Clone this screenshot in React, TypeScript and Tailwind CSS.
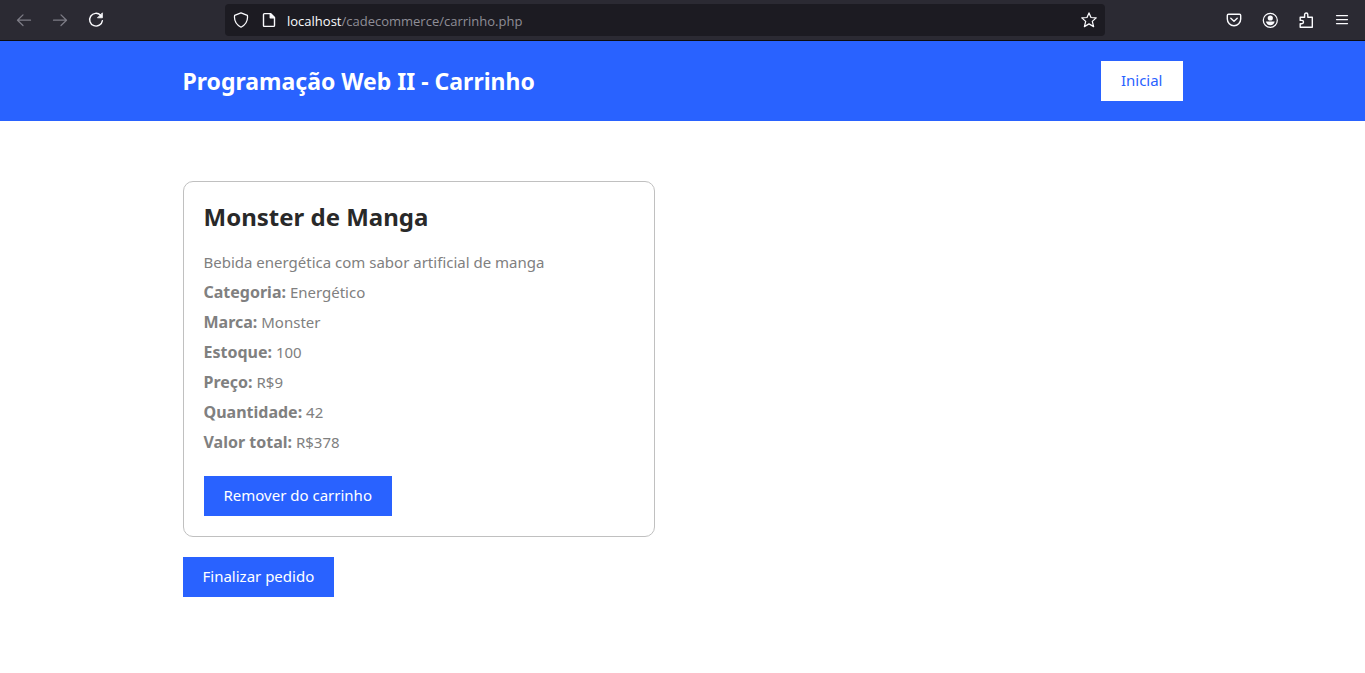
import type { ReactNode } from "react";

function Icon({ children, className = "" }: { children: ReactNode; className?: string }) {
  return (
    <svg
      viewBox="0 0 16 16"
      className={`h-4 w-4 ${className}`}
      fill="none"
      stroke="currentColor"
      strokeWidth="1.25"
      strokeLinecap="round"
      strokeLinejoin="round"
      aria-hidden="true"
    >
      {children}
    </svg>
  );
}

function ToolButton({ label, disabled, children }: { label: string; disabled?: boolean; children: ReactNode }) {
  return (
    <button
      type="button"
      aria-label={label}
      disabled={disabled}
      className="flex h-8 w-9 items-center justify-center text-[#fbfbfe] disabled:text-[#7d7c86]"
    >
      {children}
    </button>
  );
}

function BrowserBar() {
  return (
    <div className="flex h-[41px] items-center border-b border-[#0c0c0d] bg-[#2b2a33]">
      <div className="flex w-[225px] shrink-0 pl-1.5">
        <ToolButton label="Voltar" disabled>
          <Icon><path d="M14.5 8.2H1.5M7 2.9L1.5 8.2L7 13.5" /></Icon>
        </ToolButton>
        <ToolButton label="Avançar" disabled>
          <Icon><path d="M1.5 8.2H14.5M9 2.9L14.5 8.2L9 13.5" /></Icon>
        </ToolButton>
        <ToolButton label="Recarregar">
          <Icon>
            <path d="M12.6 3.2A6.4 6.4 0 1 0 14.4 8.6" strokeWidth="1.4" />
            <path d="M14.4 1.2V5.8H9.8Z" fill="currentColor" stroke="currentColor" strokeWidth="0.8" />
          </Icon>
        </ToolButton>
      </div>
      <div className="flex h-8 flex-1 items-center rounded bg-[#1c1b22] px-2 text-[#fbfbfe]">
        <Icon>
          <path d="M8 .9L14.4 3.4C15 7.9 13 12.6 8 15.2C3 12.6 1 7.9 1.6 3.4Z" />
        </Icon>
        <Icon className="ml-3">
          <path d="M3.5 1.6H9.5L13.5 5.6V13.4Q13.5 14.4 12.5 14.4H3.5Q2.5 14.4 2.5 13.4V2.6Q2.5 1.6 3.5 1.6Z" strokeWidth="1.4" />
          <path d="M9.2 1.6V5.8H13.4Z" fill="currentColor" />
        </Icon>
        <p className="ml-2.5 flex-1 pt-0.5 font-['Open_Sans',sans-serif] text-[13px] leading-4 text-[#8f8e97]">
          <span className="text-[#fbfbfe]">localhost</span>/cadecommerce/carrinho.php
        </p>
        <button type="button" aria-label="Adicionar aos favoritos">
          <Icon>
            <path d="M8 .9L10 5.5L15.2 5.9L11.3 9.4L12.6 14.6L8 11.9L3.4 14.6L4.7 9.4L.8 5.9L6 5.5Z" />
          </Icon>
        </button>
      </div>
      <div className="flex w-[260px] shrink-0 justify-end pr-[5px]">
        <ToolButton label="Salvar no Pocket">
          <Icon>
            <path d="M2.5 2.2H13.5Q14.7 2.2 14.7 3.4V7A6.7 6.7 0 0 1 1.3 7V3.4Q1.3 2.2 2.5 2.2Z" strokeWidth="1.4" />
            <path d="M4.8 6.2L8 9.2L11.2 6.2" strokeWidth="1.4" />
          </Icon>
        </ToolButton>
        <ToolButton label="Conta">
          <Icon>
            <circle cx="8.3" cy="8.3" r="7" />
            <circle cx="8.3" cy="6" r="2.6" fill="currentColor" stroke="none" />
            <path d="M3.9 9.6H12.7Q11.9 13.2 8.3 13.2Q4.7 13.2 3.9 9.6Z" fill="currentColor" stroke="none" />
          </Icon>
        </ToolButton>
        <ToolButton label="Extensões">
          <Icon>
            <path d="M2.2 15.2V11.8H3.8A1.7 1.7 0 0 0 3.8 8.4H2.2V5.2H6.6V2.6A1.6 1.6 0 0 1 9.8 2.6V5.2H14.3V15.2Z" strokeWidth="1.4" />
          </Icon>
        </ToolButton>
        <ToolButton label="Menu">
          <Icon><path d="M2.5 3.5H13.5M2.5 7.5H13.5M2.5 11.5H13.5" /></Icon>
        </ToolButton>
      </div>
    </div>
  );
}

const details = [
  ["Categoria", "Energético"],
  ["Marca", "Monster"],
  ["Estoque", "100"],
  ["Preço", "R$9"],
  ["Quantidade", "42"],
  ["Valor total", "R$378"],
];

export default function App() {
  return (
    <div className="min-h-screen bg-white font-['Noto_Sans',sans-serif] text-[15px]">
      <BrowserBar />
      <header className="bg-[#2962ff] py-5">
        <div className="mx-auto flex max-w-[1000px] items-center justify-between">
          <h1 className="text-[23px] leading-10 font-bold text-white">Programação Web II - Carrinho</h1>
          <a href="#inicial" className="bg-white px-5 pb-0.5 leading-[38px] text-[#2962ff]">
            Inicial
          </a>
        </div>
      </header>
      <main className="mx-auto max-w-[1000px] py-15">
        <article className="max-w-[472px] rounded-[10px] border border-[#c0c0c0] p-5 leading-[30px] text-[#808080]">
          <h2 className="mb-[15px] text-[24px] leading-[30px] font-bold text-[#292929]">Monster de Manga</h2>
          <p>Bebida energética com sabor artificial de manga</p>
          {details.map(([label, value]) => (
            <p key={label} className="h-[30px]">
              <strong className="text-[16px]">{label}:</strong> {value}
            </p>
          ))}
          <button type="button" className="mt-[19px] block bg-[#2962ff] px-5 pb-0.5 leading-[38px] text-white">
            Remover do carrinho
          </button>
        </article>
        <button type="button" className="mt-5 block bg-[#2962ff] px-5 pb-0.5 leading-[38px] text-white">
          Finalizar pedido
        </button>
      </main>
    </div>
  );
}
